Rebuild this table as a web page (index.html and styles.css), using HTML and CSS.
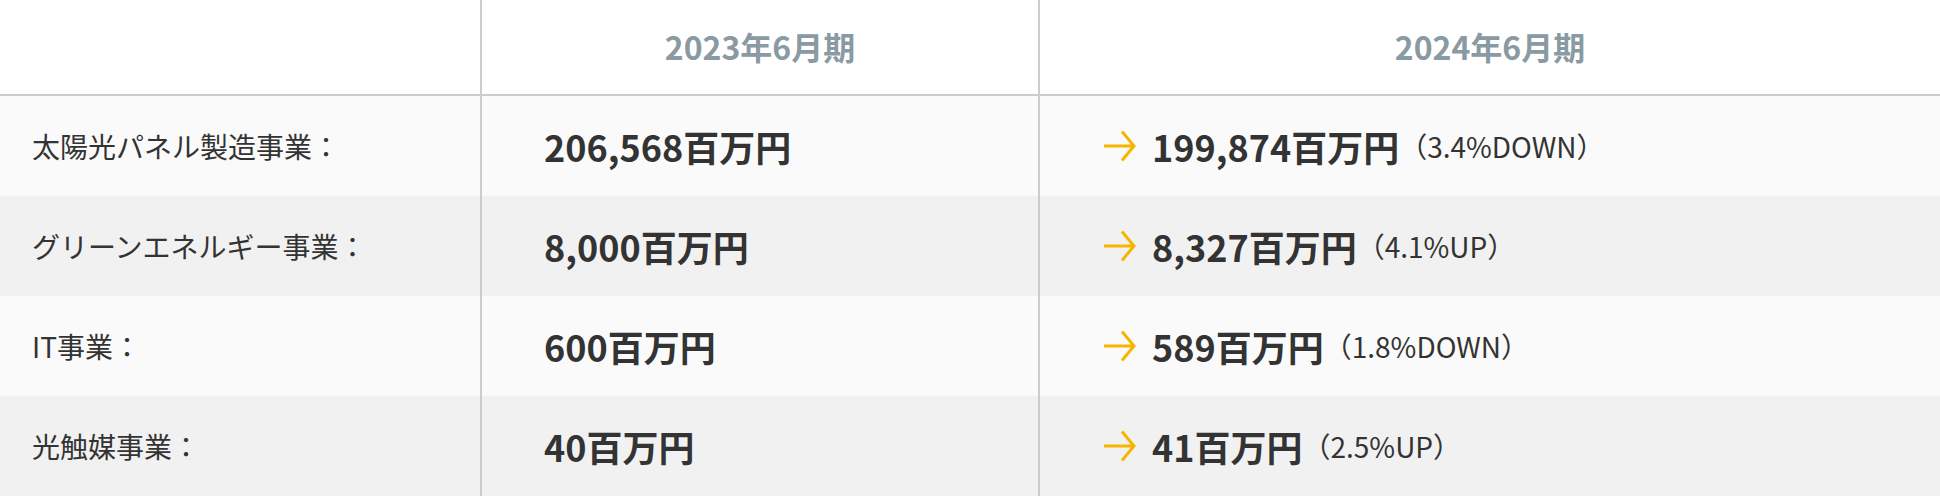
FILE: index.html
```html
<!DOCTYPE html>
<html lang="ja">
<head>
<meta charset="utf-8">
<title>業績比較</title>
<link rel="stylesheet" href="styles.css">
</head>
<body>
<div class="table">
  <div class="row head">
    <div class="cell label"></div>
    <div class="cell year">2023年6月期</div>
    <div class="cell year">2024年6月期</div>
  </div>
  <div class="row odd">
    <div class="cell label">太陽光パネル製造事業：</div>
    <div class="cell value">206,568百万円</div>
    <div class="cell value now">
      <svg class="arrow" viewBox="0 0 32 32" width="32" height="32"><path d="M0 16H30M18 1.5L30 16L18 30.5"/></svg>
      <span class="num">199,874百万円</span><span class="pct">（3.4%DOWN）</span>
    </div>
  </div>
  <div class="row even">
    <div class="cell label">グリーンエネルギー事業：</div>
    <div class="cell value">8,000百万円</div>
    <div class="cell value now">
      <svg class="arrow" viewBox="0 0 32 32" width="32" height="32"><path d="M0 16H30M18 1.5L30 16L18 30.5"/></svg>
      <span class="num">8,327百万円</span><span class="pct">（4.1%UP）</span>
    </div>
  </div>
  <div class="row odd">
    <div class="cell label">IT事業：</div>
    <div class="cell value">600百万円</div>
    <div class="cell value now">
      <svg class="arrow" viewBox="0 0 32 32" width="32" height="32"><path d="M0 16H30M18 1.5L30 16L18 30.5"/></svg>
      <span class="num">589百万円</span><span class="pct">（1.8%DOWN）</span>
    </div>
  </div>
  <div class="row even">
    <div class="cell label">光触媒事業：</div>
    <div class="cell value">40百万円</div>
    <div class="cell value now">
      <svg class="arrow" viewBox="0 0 32 32" width="32" height="32"><path d="M0 16H30M18 1.5L30 16L18 30.5"/></svg>
      <span class="num">41百万円</span><span class="pct">（2.5%UP）</span>
    </div>
  </div>
</div>
</body>
</html>
```

FILE: styles.css
```css
html, body {
  margin: 0;
  padding: 0;
  background: #ffffff;
}
body {
  font-family: "Noto Sans CJK JP", "Noto Sans", sans-serif;
  color: #333333;
}
.table {
  display: flex;
  flex-direction: column;
  width: 1940px;
}
.row {
  display: grid;
  grid-template-columns: 482px 558px 1fr;
  height: 100px;
}
.row.head {
  height: 96px;
  background: #ffffff;
  border-bottom: 2px solid #cccccc;
  box-sizing: border-box;
}
.row.odd { background: #fafafa; }
.row.even { background: #f1f1f1; }
.cell {
  display: flex;
  align-items: center;
  box-sizing: border-box;
  white-space: nowrap;
}
.cell:nth-child(1), .cell:nth-child(2) {
  border-right: 2px solid #cccccc;
}
.year {
  justify-content: center;
  font-size: 32px;
  font-weight: 700;
  color: #8a9aa3;
  padding-bottom: 2px;
}
.label {
  padding-left: 32px;
  font-size: 28px;
  font-weight: 400;
}
.value {
  padding-left: 62px;
  font-size: 36px;
  font-weight: 700;
}
.now {
  padding-left: 64px;
}
.arrow {
  flex: none;
  margin-right: 16px;
  fill: none;
  stroke: #f9b400;
  stroke-width: 3;
}
.num {
  font-size: 36px;
  font-weight: 700;
}
.pct {
  font-size: 28px;
  font-weight: 400;
}
```
